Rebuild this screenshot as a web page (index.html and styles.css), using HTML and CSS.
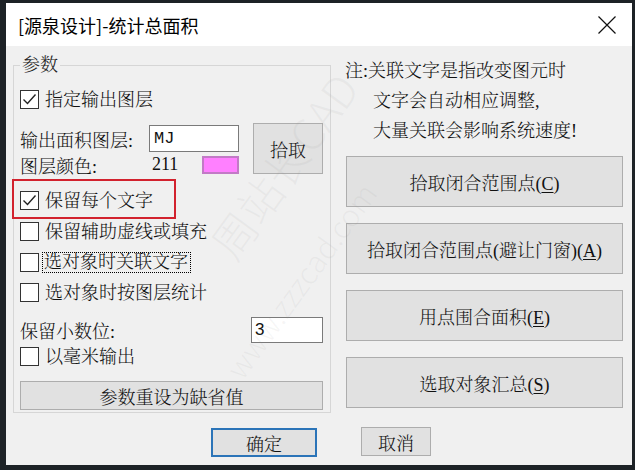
FILE: index.html
```html
<!DOCTYPE html>
<html lang="zh-CN">
<head>
<meta charset="utf-8">
<title>[源泉设计]-统计总面积</title>
<link rel="stylesheet" href="styles.css">
</head>
<body>
<div class="window">
  <div class="titlebar">
    <span class="title">[源泉设计]-统计总面积</span>
    <svg class="close" width="18" height="18" viewBox="0 0 18 18"><path d="M0.5 0.5 L17.5 17.5 M17.5 0.5 L0.5 17.5" stroke="#111" stroke-width="1.2" fill="none"/></svg>
  </div>
  <div class="client">
    <div class="main">
      <fieldset class="group">
        <legend>参数</legend>
        <label class="check row-first"><span class="box"><svg width="17" height="17" viewBox="0 0 17 17"><path d="M2.5 8.5 L6.5 12.5 L14.5 3.5" stroke="#222" stroke-width="1.4" fill="none"/></svg></span><span>指定输出图层</span></label>
        <div class="layer-block">
          <div class="layer-fields">
            <div class="field-line"><span class="lbl">输出面积图层:</span><span class="input mj">MJ</span></div>
            <div class="color-line"><span class="lbl2">图层颜色:</span><span class="num">211</span><span class="swatch"></span></div>
          </div>
          <button class="btn pick">拾取</button>
        </div>
        <div class="highlight">
          <label class="check"><span class="box"><svg width="17" height="17" viewBox="0 0 17 17"><path d="M2.5 8.5 L6.5 12.5 L14.5 3.5" stroke="#222" stroke-width="1.4" fill="none"/></svg></span><span>保留每个文字</span></label>
        </div>
        <label class="check row-a"><span class="box"></span><span>保留辅助虚线或填充</span></label>
        <label class="check row-b"><span class="box"></span><span class="focus">选对象时关联文字</span></label>
        <label class="check row-c"><span class="box"></span><span>选对象时按图层统计</span></label>
        <div class="decimal-line"><span>保留小数位:</span><span class="input num-input">3</span></div>
        <label class="check row-mm"><span class="box"></span><span>以毫米输出</span></label>
        <button class="btn reset">参数重设为缺省值</button>
      </fieldset>
      <div class="side">
        <div class="note">
          <div>注:关联文字是指改变图元时</div>
          <div class="indent">文字会自动相应调整,</div>
          <div class="indent">大量关联会影响系统速度!</div>
        </div>
        <div class="actions">
          <button class="btn big">拾取闭合范围点(<u>C</u>)</button>
          <button class="btn big">拾取闭合范围点(避让门窗)(<u>A</u>)</button>
          <button class="btn big">用点围合面积(<u>E</u>)</button>
          <button class="btn big">选取对象汇总(<u>S</u>)</button>
        </div>
      </div>
    </div>
    <div class="footer">
      <button class="btn ok">确定</button>
      <button class="btn cancel">取消</button>
    </div>
    <div class="watermark">
      <span class="wm wm1">周站长CAD</span>
      <span class="wm wm2">www.zzzcad.com</span>
    </div>
  </div>
</div>
</body>
</html>
```

FILE: styles.css
```css
* { box-sizing: border-box; }

html, body {
  margin: 0;
  padding: 0;
  background: #1d2226;
  width: 635px;
  height: 470px;
  overflow: hidden;
}

.window {
  margin: 3px 0 0 6px;
  width: 626px;
  height: 462px;
  background: #f0f0f0;
  display: flex;
  flex-direction: column;
  font-family: "Liberation Serif", "Noto Serif CJK SC", "Noto Sans CJK SC", serif;
  font-size: 18px;
  font-weight: 300;
  color: #111;
}

.titlebar {
  height: 43px;
  background: #ffffff;
  display: flex;
  align-items: center;
  justify-content: space-between;
  padding: 0 16px 0 12px;
  flex: none;
}

.title {
  font-family: "Noto Sans CJK SC", sans-serif;
  font-size: 18px;
  font-weight: 400;
  color: #000;
  line-height: 22px;
}

.close { display: block; margin-top: 1px; }

.client {
  position: relative;
  flex: 1;
}

.main {
  display: flex;
  align-items: flex-start;
  padding-left: 7px;
  gap: 14px;
}

.group {
  margin: 10px 0 0 0;
  width: 318px;
  border: 1px solid #d6d6d6;
  padding: 14px 7px 2px 6px;
  display: flex;
  flex-direction: column;
  min-inline-size: 0;
}

.group legend {
  padding: 0 2px;
  margin: 0;
  line-height: 18px;
  font-size: 18px;
  color: #222;
}

.check {
  display: flex;
  align-items: center;
  gap: 6px;
  height: 25px;
  line-height: 20px;
  white-space: nowrap;
}

.row-first { height: 23px; }

.box {
  width: 19px;
  height: 19px;
  border: 1px solid #333;
  background: #fff;
  display: flex;
  align-items: center;
  justify-content: center;
  flex: none;
}

.box svg { display: block; }

.layer-block {
  margin-top: 12px;
  height: 51px;
  display: flex;
  justify-content: space-between;
}

.layer-fields {
  display: flex;
  flex-direction: column;
  padding-top: 2px;
}

.field-line {
  display: flex;
  align-items: center;
  height: 27px;
}

.lbl { width: 129px; white-space: nowrap; }

.input {
  background: #fff;
  border: 1px solid #7a7a7a;
  display: flex;
  align-items: center;
}

.mj {
  width: 90px;
  height: 27px;
  padding-left: 4px;
  font-family: "Liberation Mono", monospace;
  font-size: 17px;
  font-weight: 400;
}

.color-line {
  display: flex;
  align-items: center;
  height: 19px;
  margin-top: 3px;
}

.lbl2 { width: 132px; white-space: nowrap; }
.num { width: 50px; }

.swatch {
  width: 37px;
  height: 18px;
  background: #ff80ff;
  border: 2px solid #c27ac6;
}

.btn {
  font: inherit;
  color: #111;
  background: #e1e1e1;
  border: 1px solid #adadad;
  padding: 0;
  cursor: default;
}

.btn u { text-decoration-thickness: 1px; text-underline-offset: 2px; }

.pick {
  width: 70px;
  height: 51px;
}

.highlight {
  margin: 5px 0 0 -8px;
  width: 164px;
  height: 40px;
  border: 2px solid #d2222e;
  padding-left: 6px;
  display: flex;
  align-items: center;
}

.highlight .check { margin-top: 3px; }

.row-a { margin-top: 0; }
.row-b { margin-top: 6px; }
.row-c { margin-top: 5px; }

.focus {
  outline: 1px dotted #000;
  outline-offset: 0;
  padding: 0 2px 0 1px;
  margin-left: -2px;
  line-height: 19px;
}

.decimal-line {
  margin-top: 12px;
  height: 26px;
  display: flex;
  align-items: center;
  justify-content: space-between;
}

.num-input {
  width: 72px;
  height: 26px;
  padding-left: 3px;
  font-family: "Liberation Sans", sans-serif;
  font-weight: 400;
  font-size: 17px;
}

.row-mm { margin-top: 1px; }

.reset {
  margin-top: 12px;
  height: 29px;
  width: 100%;
}

.side {
  width: 278px;
  margin-top: 10px;
  display: flex;
  flex-direction: column;
}

.note {
  line-height: 30px;
  white-space: nowrap;
}

.note .indent { padding-left: 28px; }

.actions {
  margin: 10px 0 0 1px;
  display: flex;
  flex-direction: column;
  gap: 16px;
}

.big {
  width: 277px;
  height: 51px;
}

.footer {
  margin-top: 15px;
  padding-left: 205px;
  display: flex;
  align-items: flex-start;
  gap: 44px;
}

.ok {
  width: 106px;
  height: 29px;
  border: 2px solid #2b74b8;
}

.cancel {
  width: 70px;
  height: 29px;
  margin-top: -1px;
}

.watermark {
  position: absolute;
  inset: 0;
  pointer-events: none;
  overflow: hidden;
}

.wm {
  position: absolute;
  white-space: nowrap;
  font-family: "Noto Sans CJK SC", sans-serif;
  font-weight: 300;
  color: rgba(150, 150, 150, 0.09);
  transform: translate(-50%, -50%) rotate(-54deg);
}

.wm1 {
  left: 277px;
  top: 119px;
  font-size: 44px;
}

.wm2 {
  left: 294px;
  top: 234px;
  font-size: 30px;
}
```
